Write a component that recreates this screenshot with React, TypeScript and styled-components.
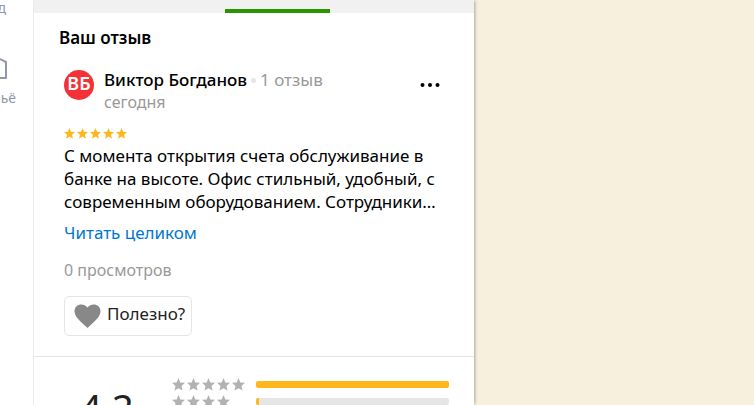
import React from "react";
import styled, { createGlobalStyle } from "styled-components";

const Global = createGlobalStyle`
  * { box-sizing: border-box; }
  body {
    margin: 0;
    background: #f6f0dd;
    color: #000;
    font-family: "Noto Sans", sans-serif;
    font-size: 17px;
  }
  button { font: inherit; color: inherit; cursor: pointer; }
`;

const Page = styled.div`
  display: flex;
  height: 100vh;
  overflow: hidden;
`;

const Rail = styled.nav`
  flex: none;
  width: 34px;
  background: #fff;
  border-right: 1px solid #ebebeb;
  overflow: hidden;
`;

const RailItem = styled.a<{ $inset: number }>`
  display: flex;
  flex-direction: column;
  align-items: flex-end;
  width: ${(p) => p.$inset}px;
  color: #9198ac;
  font-size: 14px;
  line-height: 16px;
  text-decoration: none;
`;

const HomeIcon = styled.svg`
  display: block;
  width: 24px;
  height: 24px;
  margin: 40px 9px 10px 0;
`;

const Panel = styled.main`
  flex: 0 1 440px;
  min-width: 0;
  background: #fff;
  box-shadow: 2px 0 3px -1px rgba(60, 60, 20, 0.4);
`;

const Tabs = styled.div`
  display: flex;
  align-items: flex-end;
  height: 13px;
  padding-left: 191px;
  background: #f1f1f1;
`;

const ActiveTab = styled.div`
  width: 105px;
  height: 4px;
  background: #2a9500;
`;

const Title = styled.h2`
  margin: 0;
  padding: 13px 25px 0;
  font-size: 17px;
  line-height: 24px;
  font-weight: 600;
`;

const Review = styled.article`
  padding: 20px 30px 20px;
  border-bottom: 1px solid #e5e5e5;
`;

const Author = styled.header`
  display: flex;
  gap: 10px;
`;

const Avatar = styled.div`
  display: flex;
  align-items: center;
  justify-content: center;
  width: 30px;
  height: 30px;
  border-radius: 50%;
  background: #f33137;
  color: #fff;
  font-size: 18px;
  line-height: 26px;
  padding-bottom: 4px;
  font-weight: 600;
`;

const Who = styled.div`
  flex: 1;
  line-height: 22px;
`;

const NameRow = styled.div`
  display: flex;
  align-items: center;
  gap: 4px;
  height: 20px;
`;

const Name = styled.span`
  font-weight: 500;
`;

const Dot = styled.i`
  width: 5px;
  height: 5px;
  border-radius: 50%;
  background: #e5e5e5;
`;

const Muted = styled.span`
  color: #999;
`;

const Small = styled.div`
  color: #999;
  font-size: 16px;
  line-height: 24px;
`;

const Menu = styled.button`
  display: flex;
  align-items: center;
  align-self: flex-start;
  height: 30px;
  padding: 0 4px 0 0;
  border: 0;
  background: none;
`;

const Stars = styled.div<{ $gap: number }>`
  display: flex;
  gap: ${(p) => p.$gap}px;
`;

const StarIcon = styled.svg`
  display: block;
  flex: none;
`;

const Rating = styled.div`
  padding: 14px 0 5px;
`;

const Body = styled.p`
  margin: 0;
  line-height: 23px;
`;

const More = styled.a`
  display: block;
  margin-top: 8px;
  line-height: 24px;
  color: #0077cc;
  text-decoration: none;
`;

const Views = styled(Small)`
  margin: 13px 0 14px;
`;

const Useful = styled.button`
  display: flex;
  align-items: center;
  gap: 6px;
  height: 40px;
  padding: 0 6px 0 9px;
  border: 1px solid #e5e5e5;
  border-radius: 5px;
  background: #fff;
  color: #222;
`;

const UsefulLabel = styled.span`
  line-height: 24px;
  padding-bottom: 4px;
`;

const Summary = styled.section`
  display: flex;
  align-items: flex-start;
  padding: 21px 25px 0 46px;
`;

const Score = styled.div`
  width: 92px;
  padding-top: 4px;
  color: #222;
  font-size: 38px;
  line-height: 50px;
`;

const Breakdown = styled.div`
  flex: 1;
`;

const Line = styled.div`
  display: grid;
  grid-template-columns: 74px 1fr;
  column-gap: 10px;
  align-items: center;
  height: 17px;
  padding-bottom: 4px;
`;

const Track = styled.div`
  height: 7px;
  border-radius: 2px;
  overflow: hidden;
  background: #e5e5e5;
`;

const Fill = styled.div`
  height: 100%;
  background: #ffb81c;
`;

function StarRow({ count, size, gap, color }: { count: number; size: number; gap: number; color: string }) {
  return (
    <Stars $gap={gap} role="img" aria-label={`${count} из 5`}>
      {Array.from({ length: count }, (_, i) => (
        <StarIcon key={i} width={size} height={size} viewBox="0 0 24 24" fill={color}>
          <path d="M12 0 15.4 8.2 24 8.9 17.500 14.600 19.500 23.200 12 18.700 4.500 23.200 6.500 14.600 0 8.900 8.600 8.200Z" />
        </StarIcon>
      ))}
    </Stars>
  );
}

const distribution = [
  { stars: 5, share: 100 },
  { stars: 4, share: 1.5 },
];

export default function App() {
  return (
    <Page>
      <Global />
      <Rail>
        <RailItem href="#" $inset={6}>д</RailItem>
        <RailItem href="#" $inset={16}>
          <HomeIcon viewBox="0 0 24 24" fill="none" stroke="#9198ac" strokeWidth="2" strokeLinejoin="round">
            <path d="M3 22V7l10-6 10 5v16Z" />
          </HomeIcon>
          льё
        </RailItem>
      </Rail>
      <Panel>
        <Tabs><ActiveTab /></Tabs>
        <Title>Ваш отзыв</Title>
        <Review>
          <Author>
            <Avatar>ВБ</Avatar>
            <Who>
              <NameRow>
                <Name>Виктор Богданов</Name>
                <Dot />
                <Muted>1 отзыв</Muted>
              </NameRow>
              <Small>сегодня</Small>
            </Who>
            <Menu aria-label="Ещё">
              <svg width="20" height="4" viewBox="0 0 20 4">
                <circle cx="2.5" cy="2" r="2" />
                <circle cx="10" cy="2" r="2" />
                <circle cx="17.5" cy="2" r="2" />
              </svg>
            </Menu>
          </Author>
          <Rating><StarRow count={5} size={11} gap={2} color="#ffb81c" /></Rating>
          <Body>
            С момента открытия счета обслуживание в<br />
            банке на высоте. Офис стильный, удобный, с<br />
            современным оборудованием. Сотрудники…
          </Body>
          <More href="#">Читать целиком</More>
          <Views>0 просмотров</Views>
          <Useful>
            <svg width="27" height="24" viewBox="0 0 27 24" fill="#888">
              <path d="M13.5 24 11.6 22.2C4.8 16 .5 12.2.5 7.2.5 3.2 3.6.5 7.3.5c2.4 0 4.7 1.1 6.2 3C15 1.600 17.300.5 19.700.5c3.700 0 6.800 2.700 6.800 6.700 0 5-4.300 8.800-11.100 15Z" />
            </svg>
            <UsefulLabel>Полезно?</UsefulLabel>
          </Useful>
        </Review>
        <Summary>
          <Score>4,2</Score>
          <Breakdown>
            {distribution.map((d) => (
              <Line key={d.stars}>
                <StarRow count={d.stars} size={13} gap={2} color="#b2b2b2" />
                <Track><Fill style={{ width: `${d.share}%` }} /></Track>
              </Line>
            ))}
          </Breakdown>
        </Summary>
      </Panel>
    </Page>
  );
}
